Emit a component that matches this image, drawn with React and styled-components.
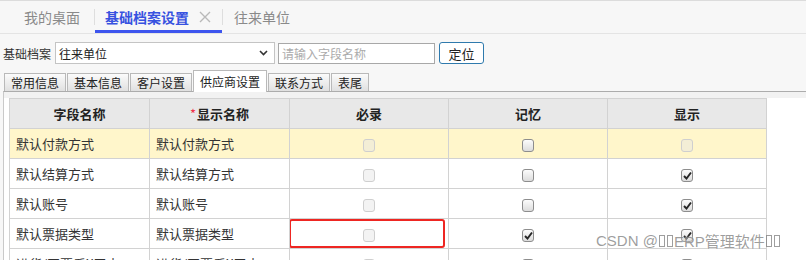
import React from "react";
import styled, { createGlobalStyle } from "styled-components";

const GlobalStyle = createGlobalStyle`
  html, body {
    margin: 0;
    padding: 0;
  }
  body {
    background: #f7f7f7;
    font-family: "Noto Sans CJK SC", "Liberation Sans", sans-serif;
    color: #333;
  }
`;

const Page = styled.div`
  position: relative;
  width: 806px;
  height: 260px;
  overflow: hidden;
  background: #f7f7f7;
`;

/* top window tabs */
const TopBar = styled.div`
  display: flex;
  height: 32px;
  border-top: 1px solid #dcdcdc;
  border-bottom: 1px solid #e4e4e4;
`;

const TopTab = styled.div`
  display: flex;
  align-items: center;
  gap: 10px;
  box-sizing: border-box;
  height: 32px;
  padding: ${({ pad }) => pad};
  font-size: 14px;
  color: ${({ active }) => (active ? "#3752e0" : "#8a8a8a")};
  font-weight: ${({ active }) => (active ? 600 : 400)};
  border-bottom: 3px solid ${({ active }) => (active ? "#3d55ee" : "transparent")};
  padding-top: 3px;
`;

const Divider = styled.div`
  width: 1px;
  height: 16px;
  background: #dedede;
  align-self: center;
`;

const CloseIcon = () => (
  <svg width="12" height="12" viewBox="0 0 12 12">
    <path d="M1 1L11 11M11 1L1 11" stroke="#b9b9b9" strokeWidth="1.4" />
  </svg>
);

/* search row */
const SearchRow = styled.div`
  display: flex;
  align-items: center;
  height: 36px;
  padding: 2px 0 0 3px;
  box-sizing: border-box;
  font-size: 12px;
`;

const Label = styled.span`
  color: #333;
  font-size: 12px;
`;

const SelectBox = styled.div`
  display: flex;
  align-items: center;
  justify-content: space-between;
  box-sizing: border-box;
  width: 220px;
  height: 22px;
  margin-left: 4px;
  padding: 0 6px 0 3px;
  background: #fff;
  border: 1px solid #c4c4c4;
  font-size: 12px;
  color: #222;
`;

const SearchInput = styled.input`
  box-sizing: border-box;
  width: 157px;
  height: 21px;
  margin-left: 3px;
  padding: 0 3px;
  border: 1px solid #a8a8a8;
  background: #fff;
  font-family: inherit;
  font-size: 12px;
  outline: none;
  &::placeholder {
    color: #ababab;
  }
`;

const LocateButton = styled.button`
  box-sizing: border-box;
  width: 45px;
  height: 22px;
  margin-left: 4px;
  padding: 0;
  background: #fff;
  border: 1px solid #2f7aad;
  border-radius: 3px;
  font-family: inherit;
  font-size: 13px;
  color: #222;
`;

/* sub tabs */
const TabStrip = styled.div`
  display: flex;
  align-items: flex-end;
  gap: 1px;
  height: 21px;
  padding-left: 4px;
`;

const SubTab = styled.div`
  display: flex;
  align-items: center;
  box-sizing: border-box;
  height: ${({ active }) => (active ? "22px" : "18px")};
  margin-bottom: ${({ active }) => (active ? "-1px" : "0")};
  padding: 0 6px;
  border: 1px solid #b9b9b9;
  border-bottom: none;
  background: ${({ active }) =>
    active ? "#fff" : "linear-gradient(#fbfbfb, #e0e0e0)"};
  font-size: 12px;
  color: #222;
  position: relative;
  z-index: ${({ active }) => (active ? 1 : 0)};
`;

const Panel = styled.div`
  margin-left: 3px;
  border-top: 1px solid #acacac;
  border-left: 1px solid #c9c9c9;
  background: #fff;
  height: 200px;
`;

const PanelBand = styled.div`
  height: 6px;
  background: #f2f2f2;
`;

const PanelBody = styled.div`
  padding-left: 5px;
  background: #fff;
`;

const Table = styled.table`
  border-collapse: collapse;
  table-layout: fixed;
  width: 758px;
  font-size: 13px;
`;

const HeadCell = styled.th`
  height: 29px;
  padding: 0;
  border: 1px solid #d2d2d2;
  background: #e8e8e8;
  font-weight: 700;
  color: #222;
  text-align: center;
`;

const Star = styled.span`
  color: #f0304a;
  margin-right: 1px;
  font-weight: 400;
`;

const Row = styled.tr`
  background: ${({ highlight }) => (highlight ? "#fff6cb" : "#fff")};
`;

const Cell = styled.td`
  position: relative;
  height: 29px;
  padding: 0 0 0 6px;
  border: 1px solid #d2d2d2;
  color: #333;
  white-space: nowrap;
  overflow: hidden;
`;

const BoxCell = styled(Cell)`
  padding: 0;
  text-align: center;
`;

const Box = styled.span`
  display: inline-flex;
  align-items: center;
  justify-content: center;
  box-sizing: border-box;
  width: 12px;
  height: 13px;
  vertical-align: middle;
  border: 1px solid ${({ disabled }) => (disabled ? "#cfcfcf" : "#8d8d8d")};
  border-radius: 3px;
  background: ${({ disabled }) =>
    disabled ? "rgba(228, 228, 228, 0.45)" : "linear-gradient(#fcfcfc, #dcdcdc)"};
`;

const Marker = styled.div`
  position: absolute;
  left: -1px;
  top: 0;
  width: 156px;
  height: 29px;
  box-sizing: border-box;
  border: 2px solid #ee2622;
  border-radius: 3px;
`;

const Watermark = styled.div`
  position: absolute;
  left: 596px;
  top: 230px;
  display: flex;
  align-items: center;
  font-family: "Liberation Sans", "Noto Sans CJK SC", sans-serif;
  font-size: 15px;
  color: rgba(120, 120, 120, 0.72);
  text-shadow: 0 0 2px rgba(255, 255, 255, 0.8);
`;

const Tofu = styled.span`
  display: inline-block;
  box-sizing: border-box;
  width: 6px;
  height: 12px;
  margin: 0 1px;
  border: 1px solid rgba(120, 120, 120, 0.72);
`;

const CheckBox = ({ checked, disabled }) => (
  <Box disabled={disabled}>
    {checked && (
      <svg width="9" height="9" viewBox="0 0 9 9">
        <path d="M1 5L3.5 7.5L8 1.5" fill="none" stroke="#262626" strokeWidth="1.9" />
      </svg>
    )}
  </Box>
);

const subTabs = ["常用信息", "基本信息", "客户设置", "供应商设置", "联系方式", "表尾"];

const rows = [
  { name: "默认付款方式", req: false, mem: false, show: false, showOff: true, yellow: true },
  { name: "默认结算方式", req: false, mem: false, show: true },
  { name: "默认账号", req: false, mem: false, show: true },
  { name: "默认票据类型", req: false, mem: true, show: true, marked: true },
  { name: "进货/开票后X天内", req: false, mem: false, show: true },
];

export default function App() {
  return (
    <Page>
      <GlobalStyle />
      <TopBar>
        <TopTab pad="0 14px 0 24px">我的桌面</TopTab>
        <Divider />
        <TopTab active pad="0 11px 0 10px">
          基础档案设置
          <CloseIcon />
        </TopTab>
        <Divider />
        <TopTab pad="0 12px 0 11px">往来单位</TopTab>
      </TopBar>

      <SearchRow>
        <Label>基础档案</Label>
        <SelectBox>
          往来单位
          <svg width="9" height="6" viewBox="0 0 9 6">
            <path d="M1 1L4.5 4.5L8 1" fill="none" stroke="#333" strokeWidth="1.6" />
          </svg>
        </SelectBox>
        <SearchInput placeholder="请输入字段名称" />
        <LocateButton>定位</LocateButton>
      </SearchRow>

      <TabStrip>
        {subTabs.map((t) => (
          <SubTab key={t} active={t === "供应商设置"}>
            {t}
          </SubTab>
        ))}
      </TabStrip>

      <Panel>
        <PanelBand />
        <PanelBody>
          <Table>
            <colgroup>
              <col style={{ width: 140 }} />
              <col style={{ width: 140 }} />
              <col style={{ width: 159 }} />
              <col style={{ width: 159 }} />
              <col style={{ width: 159 }} />
            </colgroup>
            <thead>
              <tr>
                <HeadCell>字段名称</HeadCell>
                <HeadCell>
                  <Star>*</Star>显示名称
                </HeadCell>
                <HeadCell>必录</HeadCell>
                <HeadCell>记忆</HeadCell>
                <HeadCell>显示</HeadCell>
              </tr>
            </thead>
            <tbody>
              {rows.map((r) => (
                <Row key={r.name} highlight={r.yellow}>
                  <Cell>{r.name}</Cell>
                  <Cell>{r.name}</Cell>
                  <BoxCell>
                    <CheckBox checked={r.req} disabled />
                    {r.marked && <Marker />}
                  </BoxCell>
                  <BoxCell>
                    <CheckBox checked={r.mem} />
                  </BoxCell>
                  <BoxCell>
                    <CheckBox checked={r.show} disabled={r.showOff} />
                  </BoxCell>
                </Row>
              ))}
            </tbody>
          </Table>
        </PanelBody>
      </Panel>

      <Watermark>
        CSDN @<Tofu />
        <Tofu />
        ERP管理软件
        <Tofu />
        <Tofu />
      </Watermark>
    </Page>
  );
}
